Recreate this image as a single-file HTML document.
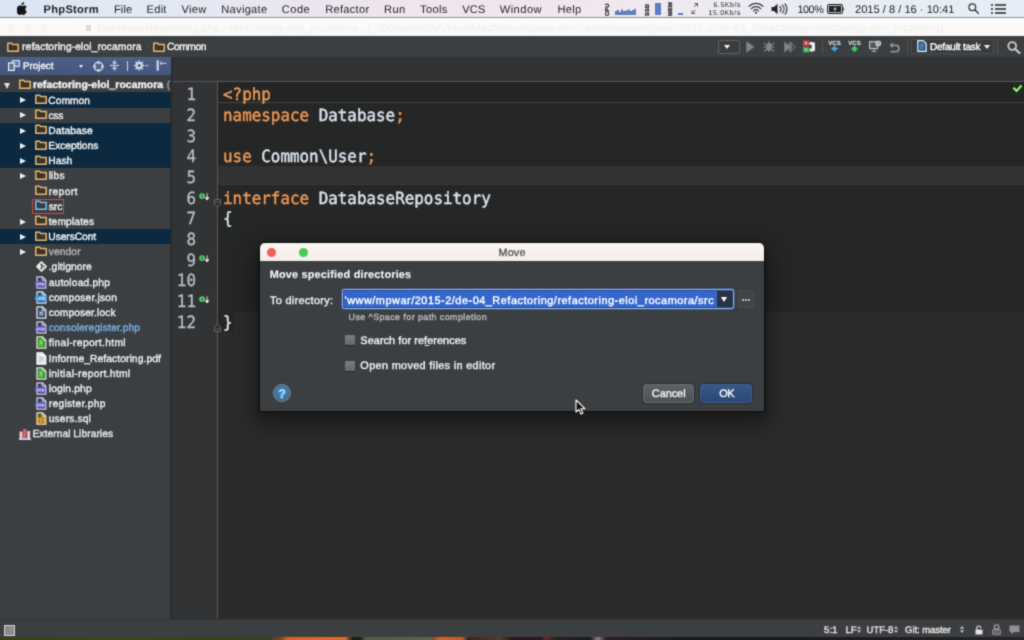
<!DOCTYPE html>
<html><head><meta charset="utf-8"><title>Move</title>
<style>
*{box-sizing:border-box;margin:0;padding:0}
html,body{width:1024px;height:640px;overflow:hidden;background:#2b2b2b}
#stage{position:absolute;left:0;top:0;width:1024px;height:640px;overflow:hidden;filter:url(#soft)}
body{position:relative;font-family:"Liberation Sans",sans-serif;color:#e8e8e8;text-rendering:geometricPrecision}
.abs{position:absolute}
.tx{position:absolute;white-space:pre;font-family:"Liberation Sans",sans-serif;-webkit-text-stroke:.38px currentColor}
#menubar{left:0;top:0;width:1024px;height:18px;background:linear-gradient(90deg,#dae6f3 0%,#e2e9f4 15%,#ebe5ef 30%,#f1e5ed 45%,#f2e7ee 58%,#edeaf2 70%,#e7edf5 85%,#e5edf6 100%);border-bottom:1px solid #8f9195}
#titlebar{left:0;top:18px;width:1024px;height:18px;background:linear-gradient(180deg,#fefdfd,#f9f7f6)}
#toolbar{left:0;top:36px;width:1024px;height:21px;background:#3c3f41}
#tabs{left:173px;top:57px;width:851px;height:24px;background:#313335}
#tabline{left:173px;top:80.700px;width:851px;height:1px;background:#555759}
#panel{left:0;top:57px;width:170px;height:562px;background:#3c3f41}
#split{left:170px;top:57px;width:2.500px;height:562px;background:#2c2e2f}
#phead{left:0;top:57.200px;width:170.500px;height:18px;background:linear-gradient(180deg,#4c5f87,#44567d)}
.row{position:absolute;left:0;width:170.500px;height:15.170px}
.row.sel{background:#0c293f}
.row .ar{position:absolute;top:4.800px;width:0;height:0;border-left:6.600px solid #f0f0f0;border-top:3.700px solid transparent;border-bottom:3.700px solid transparent}
.row .ard{position:absolute;top:5.500px;width:0;height:0;border-top:6px solid #e4e4e4;border-left:3.200px solid transparent;border-right:3.200px solid transparent}
.row svg{position:absolute}
#gutter{left:172.500px;top:81px;width:45.500px;height:538px;background:#313335;border-right:1px solid #58595a}
#editor{left:218px;top:81px;width:806px;height:538px;background:#2b2b2b}
.ln{position:absolute;left:164.200px;width:32px;text-align:right;font-family:"DejaVu Sans Mono","Liberation Mono",monospace;font-size:16.800px;line-height:20.690px;color:#b9bdc0;transform:scaleX(.9465);transform-origin:100% 50%;-webkit-text-stroke:.35px currentColor}
.code{position:absolute;left:222.600px;font-family:"DejaVu Sans Mono","Liberation Mono",monospace;font-size:16.800px;line-height:20.690px;color:#dbe4ee;white-space:pre;transform:scaleX(.9465);transform-origin:0 50%;-webkit-text-stroke:.45px currentColor}
.k{color:#ee9854}
#status{left:0;top:619px;width:1024px;height:18px;background:#3c3f41;border-top:1px solid #333537}
#wall{left:0;top:636.500px;width:1024px;height:4px;background:linear-gradient(90deg,#3a3f16 0,#3f4417 120px,#37401a 270px,#7a4a1c 281px,#d8661e 288px,#e06a1f 345px,#1a1a14 353px,#1d201a 360px,#4f5f4c 366px,#55634f 425px,#8a5428 434px,#d4641f 440px,#c45a20 462px,#3a2418 468px,#5a3a22 500px,#2a1a1a 512px,#251a1c 540px,#6a2226 546px,#2a2022 556px,#201a1c 590px,#8a8078 598px,#2a2022 606px,#1c1618 700px,#221a1c 860px,#2a2426 1024px)}
#dlg{left:260px;top:242.800px;width:504px;height:168.400px;background:#3c3f41;border-radius:5px 5px 2.500px 2.500px;box-shadow:0 9px 22px 7px rgba(0,0,0,.36),0 1px 5px 1px rgba(0,0,0,.25),0 0 0 1px rgba(0,0,0,.3)}
#dtitle{left:0;top:0;width:504px;height:18px;background:linear-gradient(180deg,#fbf5f4,#f4edeb);border-radius:5px 5px 0 0}
.dot{position:absolute;top:5px;width:9.200px;height:9.200px;border-radius:50%}
.btn{position:absolute;top:140.800px;height:19px;border-radius:3px;border:1px solid #666b6e;box-shadow:0 0 0 1px rgba(0,0,0,.25)}
</style></head><body>
<svg width="0" height="0" style="position:absolute"><filter id="soft" x="0" y="0" width="100%" height="100%" color-interpolation-filters="sRGB"><feConvolveMatrix order="3" kernelMatrix="0.03 0.11 0.03 0.11 0.44 0.11 0.03 0.11 0.03" divisor="1" edgeMode="duplicate" preserveAlpha="true"/></filter></svg>
<div id="stage">

<div id="menubar" class="abs">
<svg class="abs" style="left:17px;top:1.500px" width="10" height="13" viewBox="0 0 10 13"><path d="M7.200 0c.1.900-.3 1.700-.8 2.300-.5.600-1.300 1-2 .9-.1-.9.300-1.700.8-2.200C5.700.4 6.500 0 7.200 0zM9.800 9.400c-.3.700-.5 1.100-.9 1.700-.5.800-1.300 1.800-2.200 1.800-.8 0-1-.5-2.100-.5s-1.400.5-2.200.5c-.9 0-1.600-.9-2.100-1.700C-.5 9-.7 6.300.5 4.900 1.100 4.100 2 3.600 2.900 3.600c.9 0 1.500.5 2.300.5.700 0 1.200-.5 2.300-.5.800 0 1.700.4 2.300 1.200-2 1.100-1.700 3.900 0 4.600z" fill="#151515"/></svg>
<span class="tx" style="left:43.60px;top:3.00px;font-size:11.1px;line-height:14px;color:#222;letter-spacing:0.283px;font-weight:bold;-webkit-text-stroke:0;">PhpStorm</span>
<span class="tx" style="left:114.00px;top:3.00px;font-size:11.1px;line-height:14px;color:#222;letter-spacing:0.079px;-webkit-text-stroke:0;">File</span>
<span class="tx" style="left:146.60px;top:3.00px;font-size:11.1px;line-height:14px;color:#222;letter-spacing:0.243px;-webkit-text-stroke:0;">Edit</span>
<span class="tx" style="left:181.40px;top:3.00px;font-size:11.1px;line-height:14px;color:#222;letter-spacing:0.335px;-webkit-text-stroke:0;">View</span>
<span class="tx" style="left:221.30px;top:3.00px;font-size:11.1px;line-height:14px;color:#222;letter-spacing:0.287px;-webkit-text-stroke:0;">Navigate</span>
<span class="tx" style="left:281.80px;top:3.00px;font-size:11.1px;line-height:14px;color:#222;letter-spacing:0.466px;-webkit-text-stroke:0;">Code</span>
<span class="tx" style="left:325.30px;top:3.00px;font-size:11.1px;line-height:14px;color:#222;letter-spacing:0.269px;-webkit-text-stroke:0;">Refactor</span>
<span class="tx" style="left:384.10px;top:3.00px;font-size:11.1px;line-height:14px;color:#222;letter-spacing:0.379px;-webkit-text-stroke:0;">Run</span>
<span class="tx" style="left:420.00px;top:3.00px;font-size:11.1px;line-height:14px;color:#222;letter-spacing:0.378px;-webkit-text-stroke:0;">Tools</span>
<span class="tx" style="left:462.20px;top:3.00px;font-size:11.1px;line-height:14px;color:#222;letter-spacing:0.192px;-webkit-text-stroke:0;">VCS</span>
<span class="tx" style="left:499.70px;top:3.00px;font-size:11.1px;line-height:14px;color:#222;letter-spacing:0.487px;-webkit-text-stroke:0;">Window</span>
<span class="tx" style="left:557.50px;top:3.00px;font-size:11.1px;line-height:14px;color:#222;letter-spacing:0.243px;-webkit-text-stroke:0;">Help</span>
<span class="tx" style="left:797.50px;top:3.00px;font-size:10.8px;line-height:14px;color:#222;letter-spacing:-0.455px;-webkit-text-stroke:0;">100%</span>
<span class="tx" style="left:855.00px;top:3.00px;font-size:11.1px;line-height:14px;color:#222;letter-spacing:0.007px;-webkit-text-stroke:0;">2015 / 8 / 16 · 10:41</span>
<span class="tx" style="left:713.50px;top:2.00px;font-size:6.8px;line-height:8px;color:#222;letter-spacing:0.635px;-webkit-text-stroke:0;">6.5Kb/s</span>
<span class="tx" style="left:708.60px;top:10.00px;font-size:6.8px;line-height:8px;color:#222;letter-spacing:0.695px;-webkit-text-stroke:0;">15.0Kb/s</span>
<span class="tx" style="left:605px;top:15.500px;font-size:5.600px;line-height:6px;font-weight:bold;color:#333;transform:rotate(-90deg);transform-origin:0 0;letter-spacing:.3px">CPU</span>
<span class="tx" style="left:644.5px;top:15.500px;font-size:5.600px;line-height:6px;font-weight:bold;color:#333;transform:rotate(-90deg);transform-origin:0 0;letter-spacing:.3px">SSD</span>
<span class="tx" style="left:667.5px;top:15.500px;font-size:5.600px;line-height:6px;font-weight:bold;color:#333;transform:rotate(-90deg);transform-origin:0 0;letter-spacing:.3px">MEM</span>
<svg class="abs" style="left:615px;top:8px" width="23" height="7" viewBox="0 0 23 7"><path d="M0 7V3h2V2h2v2h2V1.500h2V3h2V2.500h3V1.500h2V3h2V2h2V1h2v6z" fill="#5f7fbe"/></svg>
<div class="abs" style="left:655px;top:3px;width:5.500px;height:11.600px;background:#5c7dc6"></div>
<div class="abs" style="left:678.400px;top:12.600px;width:5px;height:2px;background:#5c7dc6"></div>
<svg class="abs" style="left:691px;top:2px" width="8" height="13" viewBox="0 0 8 13"><path d="M3.500 1.500h3v3M6.500 1.500l-3.500 3.500M4 11.500h-3v-3M1 11.500l3.500-3.500" fill="none" stroke="#555" stroke-width="1"/></svg>
<svg class="abs" style="left:748px;top:2px" width="16" height="12" viewBox="0 0 16 12"><path d="M1 4.200a10 10 0 0 1 14 0M3.300 6.600a6.700 6.700 0 0 1 9.400 0M5.600 8.900a3.400 3.400 0 0 1 4.800 0" fill="none" stroke="#333" stroke-width="1.200" stroke-linecap="round"/><circle cx="8" cy="10.800" r="1.050" fill="#333"/></svg>
<svg class="abs" style="left:771px;top:2.500px" width="19" height="12" viewBox="0 0 19 12"><path d="M.5 4h2.500l3.500-3.200v10.400L3 8H.5z" fill="#222"/><path d="M9 3.500a3.500 3.500 0 0 1 0 5M11.500 2a6 6 0 0 1 0 8M14 .8a8 8 0 0 1 0 10.400" fill="none" stroke="#222" stroke-width="1.100" stroke-linecap="round"/></svg>
<svg class="abs" style="left:827px;top:3.500px" width="18" height="10" viewBox="0 0 18 10"><rect x=".6" y=".6" width="14.800" height="8.800" rx="1.500" fill="none" stroke="#222" stroke-width="1.100"/><rect x="2" y="2" width="12" height="6" fill="#222"/><path d="M16.300 3.200v3.600c1.200-.3 1.200-3.300 0-3.600z" fill="#222"/><path d="M9 2.200L6.300 5.400h1.600L7 7.800l2.800-3.200H8.100z" fill="#eee"/></svg>
<svg class="abs" style="left:968px;top:3px" width="11" height="11" viewBox="0 0 11 11"><circle cx="4.300" cy="4.300" r="3.400" fill="none" stroke="#333" stroke-width="1.200"/><path d="M6.800 6.800l3.500 3.500" stroke="#333" stroke-width="1.400" stroke-linecap="round"/></svg>
<svg class="abs" style="left:991px;top:4px" width="15" height="10" viewBox="0 0 15 10"><path d="M0 1h2M4 1h11M0 5h2M4 5h11M0 9h2M4 9h11" stroke="#222" stroke-width="1.600"/></svg>
</div>

<div id="titlebar" class="abs"><div class="abs" style="left:85.500px;top:6.500px;width:5.500px;height:6.500px;background:#dddada"></div><span class="tx" style="left:97.60px;top:3.00px;font-size:10.5px;line-height:14px;color:#f0eded;letter-spacing:0.323px;-webkit-text-stroke:0;">DatabaseRepository.php - refactoring-eloi_rocamora - [~/Documents/VirtualMachines/mpwar.dev/carmel/www/mpwar/2015-2/de-04_Refactoring/refactoring-eloi_rocamora]</span><i class="abs" style="left:7px;top:5.500px;width:8px;height:8px;border-radius:50%;background:#fdf2f2"></i><i class="abs" style="left:23.500px;top:5.500px;width:8px;height:8px;border-radius:50%;background:#fdf2f2"></i><i class="abs" style="left:40px;top:5.500px;width:8px;height:8px;border-radius:50%;background:#fdf2f2"></i></div>

<div id="toolbar" class="abs">
<svg class="abs" style="left:7.2px;top:5.6px" width="12" height="10" viewBox="0 0 12 10"><path d="M.8 1.300h3.900l1 1.300h5.500v6.600h-10.400z" fill="#3b3326" stroke="#e3b876" stroke-width="1.500" stroke-linejoin="round"/></svg>
<span class="tx" style="left:22.05px;top:5.00px;font-size:10.3px;line-height:14px;color:#f2f2f2;letter-spacing:0.092px;">refactoring-eloi_rocamora</span>
<svg class="abs" style="left:145px;top:6px" width="5" height="9" viewBox="0 0 5 9"><path d="M1 .5l3 4-3 4" fill="none" stroke="#4d5052" stroke-width="1"/></svg>
<svg class="abs" style="left:152.6px;top:5.6px" width="12" height="10" viewBox="0 0 12 10"><path d="M.8 1.300h3.900l1 1.300h5.500v6.600h-10.400z" fill="#3b3326" stroke="#e3b876" stroke-width="1.500" stroke-linejoin="round"/></svg>
<span class="tx" style="left:167.05px;top:5.00px;font-size:10.3px;line-height:14px;color:#f2f2f2;letter-spacing:-0.480px;">Common</span>
<div class="abs" style="left:717.800px;top:3.500px;width:22px;height:14px;border:1px solid #606365;border-radius:2px;background:#3a3d3f"></div>
<div class="abs" style="left:724.400px;top:8.600px;width:0;height:0;border-top:4.500px solid #f4f4f4;border-left:3.800px solid transparent;border-right:3.800px solid transparent"></div>
<svg class="abs" style="left:745.500px;top:4.500px" width="9" height="12" viewBox="0 0 9 12"><path d="M.3 .3l8.200 5.700-8.200 5.700z" fill="#828587"/></svg>
<svg class="abs" style="left:763px;top:4px" width="12" height="13" viewBox="0 0 12 13"><ellipse cx="6" cy="7" rx="2.800" ry="4" fill="#828587"/><path d="M6 1v11M1 3l3.200 2.500M11 3L7.800 5.500M.3 7h11.400M1 11.500l3.200-2.500M11 11.500L7.800 9" stroke="#828587" stroke-width="1.100" fill="none"/></svg>
<svg class="abs" style="left:784px;top:4.500px" width="12" height="12" viewBox="0 0 12 12"><path d="M.3 .5l6 5.500-6 5.500z" fill="#85888a"/><path d="M6 .8l5.300 5.200L6 11.200zM4 3l4 3-4 3M8 3l-3 3 3 3" fill="none" stroke="#85888a" stroke-width="1"/></svg>
<svg class="abs" style="left:802px;top:4px" width="14" height="13" viewBox="0 0 14 13"><rect x="1" y=".5" width="6" height="5.500" fill="#d8453e"/><rect x="1" y="7" width="6" height="5.500" fill="#3faa55"/><path d="M7.500 2h3.500a2 2 0 0 1 2 2v5.500a2 2 0 0 1-2 2H7.500V8.500h2.200V5H7.500z" fill="#eceff1"/><rect x="3" y="2" width="2" height="2" fill="#f3b5b0"/><rect x="3" y="8.700" width="2" height="2" fill="#b5e5bf"/></svg>
<div class="abs" style="left:822px;top:3px;width:1px;height:15px;background:#57503f"></div>
<svg class="abs" style="left:827.8px;top:3px" width="13" height="14" viewBox="0 0 13 14"><text x="6.500" y="5.600" text-anchor="middle" font-family="Liberation Sans, sans-serif" font-weight="bold" font-size="6.200" fill="#eef1f4">VCS</text><path d="M6.500 12.800L2.600 8.900h2.200V7.200h3.400v1.700h2.200z" fill="#4aa4e6"/></svg>
<svg class="abs" style="left:848px;top:3px" width="13" height="14" viewBox="0 0 13 14"><text x="6.500" y="5.600" text-anchor="middle" font-family="Liberation Sans, sans-serif" font-weight="bold" font-size="6.200" fill="#eef1f4">VCS</text><path d="M6.500 6.600l3.900 3.900H8.200v2H4.800v-2H2.600z" fill="#3fcf5e"/></svg>
<svg class="abs" style="left:868.500px;top:4px" width="13" height="13" viewBox="0 0 13 13"><rect x=".6" y="1.600" width="8" height="7" fill="#55585a" stroke="#b9bcbe" stroke-width="1.200"/><path d="M2.500 11.500h5M5 9v2.500" stroke="#a9acae" stroke-width="1.200"/><circle cx="9.300" cy="3.400" r="2.900" fill="#c3c6c8"/><path d="M9.300 1.800v1.800l1.200.8" stroke="#55585a" stroke-width=".8" fill="none"/></svg>
<svg class="abs" style="left:888.500px;top:5.500px" width="11" height="11" viewBox="0 0 11 11"><path d="M3.800 .3L.4 3.300l3.400 3z" fill="#8f9294"/><path d="M3 3.300h3.800a3.200 3.200 0 0 1 0 6.400H1.500" fill="none" stroke="#8f9294" stroke-width="1.700"/></svg>
<div class="abs" style="left:907px;top:3px;width:1px;height:15px;background:#55524a"></div>
<div class="abs" style="left:911.200px;top:3.400px;width:82.500px;height:14.200px;border:1px dotted #5d5a4e;background:#393c3e"></div>
<svg class="abs" style="left:916.500px;top:4.200px" width="10" height="12" viewBox="0 0 10 12"><path d="M.8 .6h5.400l3 2.900v7.900H.8z" fill="#2f5d8a" stroke="#e9eef3" stroke-width="1.200" stroke-linejoin="round"/><path d="M3.200 4.300h3.500M3.200 6.300h3.500M3.200 8.300h2.500" stroke="#7fb2de" stroke-width=".8"/></svg>
<span class="tx" style="left:930.05px;top:5.00px;font-size:9.9px;line-height:14px;color:#fafafa;letter-spacing:-0.148px;-webkit-text-stroke:.4px currentColor;">Default task</span>
<div class="abs" style="left:984px;top:8.600px;width:0;height:0;border-top:4.200px solid #f4f4f4;border-left:3.500px solid transparent;border-right:3.500px solid transparent"></div>
<div class="abs" style="left:997px;top:3px;width:1px;height:15px;background:#55524a"></div>
<svg class="abs" style="left:1007px;top:5px" width="14" height="13" viewBox="0 0 14 13"><circle cx="5.200" cy="5" r="3.900" fill="none" stroke="#c9cbcd" stroke-width="1.800"/><path d="M8.200 8l4.300 4" stroke="#c9cbcd" stroke-width="2.200" stroke-linecap="round"/></svg>
</div>

<div id="tabs" class="abs"></div>
<div id="panel" class="abs"></div>
<div id="split" class="abs"></div>
<div id="phead" class="abs">
<svg class="abs" style="left:7.500px;top:3.300px" width="12" height="11" viewBox="0 0 12 11"><rect x="4.500" y=".6" width="6.900" height="5.800" fill="#5d82b8" stroke="#e8eef6" stroke-width="1"/><rect x=".6" y="3" width="5.600" height="7.400" fill="#5b6f96" stroke="#f2f5f9" stroke-width="1.200"/></svg>
<span class="tx" style="left:22.95px;top:3.00px;font-size:9.7px;line-height:14px;color:#f4f6fa;letter-spacing:0.059px;">Project</span>
<div class="abs" style="left:78.700px;top:7.600px;width:0;height:0;border-top:3.600px solid #eef1f6;border-left:2.600px solid transparent;border-right:2.600px solid transparent"></div>
<svg class="abs" style="left:92.500px;top:3.500px" width="11" height="11" viewBox="0 0 11 11"><circle cx="5.500" cy="5.500" r="4.200" fill="none" stroke="#d6dce8" stroke-width="1.500"/><path d="M5.500 0v3.400M5.500 7.600V11M0 5.500h3.400M7.600 5.500H11" stroke="#d6dce8" stroke-width="1.400"/></svg>
<svg class="abs" style="left:110.300px;top:3.300px" width="9" height="11" viewBox="0 0 9 11"><path d="M0 5.500h9" stroke="#ccd3e0" stroke-width="1.200"/><path d="M4.500 .2v3.300M2.500 2l2 2 2-2M4.500 10.800V7.500M2.500 9l2-2 2 2" stroke="#ccd3e0" stroke-width="1.100" fill="none"/></svg>
<div class="abs" style="left:126.600px;top:3.800px;width:1.200px;height:10.500px;background:#cfd6e2"></div>
<svg class="abs" style="left:133.600px;top:3.300px" width="15" height="11" viewBox="0 0 15 11"><circle cx="5.200" cy="5.500" r="2.600" fill="none" stroke="#d6dce8" stroke-width="2"/><path d="M5.200 .4v2M5.200 8.600v2M.1 5.500h2M8.300 5.500h2M1.600 1.900l1.400 1.400M7.400 7.700l1.400 1.400M1.600 9.100L3 7.700M7.400 3.300l1.400-1.400" stroke="#d6dce8" stroke-width="1.500"/><path d="M11.700 5.700h2.600" stroke="#cfd6e2" stroke-width="1.100"/></svg>
<svg class="abs" style="left:155.500px;top:3.300px" width="11" height="11" viewBox="0 0 11 11"><path d="M1.700 .3v10.400" stroke="#dfe4ee" stroke-width="2"/><path d="M4 3.300h6.500M4 3.300l2-1.600M4 3.300l2 1.600" stroke="#ccd3e0" stroke-width="1" fill="none"/></svg>
</div>

<div id="tree">
<div class="row" style="top:77.30px"><i class="ard" style="left:3.7px"></i><svg style="left:18.7px;top:1.600px" width="12" height="10" viewBox="0 0 12 10"><path d="M.8 1.300h3.900l1 1.300h5.500v6.600h-10.400z" fill="#3b3326" stroke="#e3b876" stroke-width="1.500" stroke-linejoin="round"/></svg><span class="tx" style="left:32.95px;top:1.70px;font-size:10.4px;line-height:14px;color:#f4f4f4;letter-spacing:0.057px;font-weight:bold;">refactoring-eloi_rocamora</span><span class="tx" style="left:166.75px;top:1.70px;font-size:10.3px;line-height:14px;color:#9a9a9a;letter-spacing:0.000px;">(</span></div>
<div class="row sel" style="top:92.47px"><i class="ar" style="left:19.8px"></i><svg style="left:34.7px;top:1.600px" width="12" height="10" viewBox="0 0 12 10"><path d="M.8 1.300h3.900l1 1.300h5.500v6.600h-10.400z" fill="#3b3326" stroke="#e3b876" stroke-width="1.500" stroke-linejoin="round"/></svg><span class="tx" style="left:48.30px;top:2.53px;font-size:10.3px;line-height:14px;color:#f4f4f4;letter-spacing:-0.005px;">Common</span></div>
<div class="row" style="top:107.64px"><i class="ar" style="left:19.8px"></i><svg style="left:34.7px;top:1.600px" width="12" height="10" viewBox="0 0 12 10"><path d="M.8 1.300h3.900l1 1.300h5.500v6.600h-10.400z" fill="#3b3326" stroke="#e3b876" stroke-width="1.500" stroke-linejoin="round"/></svg><span class="tx" style="left:48.45px;top:2.36px;font-size:10.3px;line-height:14px;color:#ededed;letter-spacing:-0.217px;">css</span></div>
<div class="row sel" style="top:122.81px"><i class="ar" style="left:19.8px"></i><svg style="left:34.7px;top:1.600px" width="12" height="10" viewBox="0 0 12 10"><path d="M.8 1.300h3.900l1 1.300h5.500v6.600h-10.400z" fill="#3b3326" stroke="#e3b876" stroke-width="1.500" stroke-linejoin="round"/></svg><span class="tx" style="left:48.30px;top:2.19px;font-size:10.3px;line-height:14px;color:#f4f4f4;letter-spacing:0.039px;">Database</span></div>
<div class="row sel" style="top:137.98px"><i class="ar" style="left:19.8px"></i><svg style="left:34.7px;top:1.600px" width="12" height="10" viewBox="0 0 12 10"><path d="M.8 1.300h3.900l1 1.300h5.500v6.600h-10.400z" fill="#3b3326" stroke="#e3b876" stroke-width="1.500" stroke-linejoin="round"/></svg><span class="tx" style="left:48.30px;top:2.02px;font-size:10.3px;line-height:14px;color:#f4f4f4;letter-spacing:-0.033px;">Exceptions</span></div>
<div class="row sel" style="top:153.15px"><i class="ar" style="left:19.8px"></i><svg style="left:34.7px;top:1.600px" width="12" height="10" viewBox="0 0 12 10"><path d="M.8 1.300h3.900l1 1.300h5.500v6.600h-10.400z" fill="#3b3326" stroke="#e3b876" stroke-width="1.500" stroke-linejoin="round"/></svg><span class="tx" style="left:48.30px;top:1.85px;font-size:10.3px;line-height:14px;color:#f4f4f4;letter-spacing:-0.024px;">Hash</span></div>
<div class="row" style="top:168.32px"><i class="ar" style="left:19.8px"></i><svg style="left:34.7px;top:1.600px" width="12" height="10" viewBox="0 0 12 10"><path d="M.8 1.300h3.900l1 1.300h5.500v6.600h-10.400z" fill="#3b3326" stroke="#e3b876" stroke-width="1.500" stroke-linejoin="round"/></svg><span class="tx" style="left:48.65px;top:1.68px;font-size:10.3px;line-height:14px;color:#ededed;letter-spacing:0.161px;">libs</span></div>
<div class="row" style="top:183.49px"><svg style="left:34.7px;top:1.600px" width="12" height="10" viewBox="0 0 12 10"><path d="M.8 1.300h3.900l1 1.300h5.500v6.600h-10.400z" fill="#3b3326" stroke="#e3b876" stroke-width="1.500" stroke-linejoin="round"/></svg><span class="tx" style="left:48.65px;top:2.51px;font-size:10.3px;line-height:14px;color:#ededed;letter-spacing:0.383px;">report</span></div>
<div class="row" style="top:198.66px"><svg style="left:34.7px;top:1.600px" width="12" height="10" viewBox="0 0 12 10"><path d="M.8 1.300h3.900l1 1.300h5.500v6.600h-10.400z" fill="#2d3d4a" stroke="#86bfe6" stroke-width="1.500" stroke-linejoin="round"/></svg><i style="position:absolute;left:32px;top:.6px;width:32px;height:15px;border:1px solid #c9484a"></i><span class="tx" style="left:48.65px;top:2.34px;font-size:10.3px;line-height:14px;color:#f4f4f4;letter-spacing:-0.010px;">src</span></div>
<div class="row" style="top:213.83px"><i class="ar" style="left:19.8px"></i><svg style="left:34.7px;top:1.600px" width="12" height="10" viewBox="0 0 12 10"><path d="M.8 1.300h3.900l1 1.300h5.500v6.600h-10.400z" fill="#3b3326" stroke="#e3b876" stroke-width="1.500" stroke-linejoin="round"/></svg><span class="tx" style="left:48.65px;top:2.17px;font-size:10.3px;line-height:14px;color:#ededed;letter-spacing:0.100px;">templates</span></div>
<div class="row sel" style="top:229.00px"><i class="ar" style="left:19.8px"></i><svg style="left:34.7px;top:1.600px" width="12" height="10" viewBox="0 0 12 10"><path d="M.8 1.300h3.900l1 1.300h5.500v6.600h-10.400z" fill="#3b3326" stroke="#e3b876" stroke-width="1.500" stroke-linejoin="round"/></svg><span class="tx" style="left:48.30px;top:2.00px;font-size:10.3px;line-height:14px;color:#f4f4f4;letter-spacing:-0.100px;">UsersCont</span></div>
<div class="row" style="top:244.17px"><i class="ar" style="left:19.8px"></i><svg style="left:34.7px;top:1.600px" width="12" height="10" viewBox="0 0 12 10"><path d="M.8 1.300h3.900l1 1.300h5.500v6.600h-10.400z" fill="#3b3326" stroke="#e3b876" stroke-width="1.500" stroke-linejoin="round"/></svg><span class="tx" style="left:48.65px;top:1.83px;font-size:10.3px;line-height:14px;color:#b4b4b4;letter-spacing:0.093px;">vendor</span></div>
<div class="row" style="top:259.34px"><svg style="left:34.7px;top:1px" width="13" height="13" viewBox="0 0 13 13"><rect x="2.400" y="2.400" width="8.200" height="8.200" rx="1" transform="rotate(45 6.500 6.500)" fill="#ececec"/><circle cx="6.500" cy="4.600" r="1" fill="#3c3f41"/><circle cx="6.500" cy="8.600" r="1" fill="#3c3f41"/><circle cx="8.600" cy="6.500" r=".9" fill="#3c3f41"/><path d="M6.500 4.600v4M6.500 5l2.100 1.500" stroke="#3c3f41" stroke-width=".9" fill="none"/></svg><span class="tx" style="left:48.65px;top:1.66px;font-size:10.3px;line-height:14px;color:#ededed;letter-spacing:0.093px;">.gitignore</span></div>
<div class="row" style="top:274.51px"><svg style="left:34.7px;top:1.300px" width="12" height="13" viewBox="-1 0 12 13"><path d="M1 .8h5.300l3.500 3.400v8H1z" fill="#3d3f58" stroke="#cfd0f2" stroke-width="1.300" stroke-linejoin="round"/><path d="M6.200 .8v3.500h3.600" fill="none" stroke="#cfd0f2" stroke-width="1"/><rect x="-.6" y="5.600" width="9.800" height="4.800" rx=".8" fill="#6f63cc"/><path d="M1 7v3M1 7.300h1.200v1.500H1M3.800 6.300v3M3.800 7.300H5V9.300M6.600 7v3M6.600 7.300h1.200v1.500H6.600" stroke="#cfcaf8" stroke-width=".8" fill="none"/></svg><span class="tx" style="left:48.65px;top:2.49px;font-size:10.3px;line-height:14px;color:#ededed;letter-spacing:0.162px;">autoload.php</span></div>
<div class="row" style="top:289.68px"><svg style="left:34.7px;top:1.300px" width="12" height="13" viewBox="-1 0 12 13"><path d="M1 .8h5.300l3.500 3.400v8H1z" fill="#35506e" stroke="#cfe6fa" stroke-width="1.300" stroke-linejoin="round"/><path d="M6.200 .8v3.500h3.600" fill="none" stroke="#cfe6fa" stroke-width="1"/><rect x="-1" y="4.800" width="12" height="5.400" rx="1.300" fill="#3f8fde"/><path d="M1 6.500v2.200M3 6.200h1.500v1.300H3v1.300h1.500M6.200 6.200h1.600v2.600H6.200zM9 6.200v2.600" stroke="#d4ebfd" stroke-width=".8" fill="none"/></svg><span class="tx" style="left:48.65px;top:2.32px;font-size:10.3px;line-height:14px;color:#ededed;letter-spacing:0.153px;">composer.json</span></div>
<div class="row" style="top:304.85px"><svg style="left:34.7px;top:1.300px" width="12" height="13" viewBox="-1 0 12 13"><path d="M1 .8h5.300l3.500 3.400v8H1z" fill="#3b4652" stroke="#dce7f2" stroke-width="1.300" stroke-linejoin="round"/><path d="M6.200 .8v3.500h3.600" fill="none" stroke="#dce7f2" stroke-width="1"/><rect x="3" y="5" width="4.600" height="4.800" fill="#6a8cae"/><path d="M4 6.500h2.600M4 8h2.600" stroke="#b9cee2" stroke-width=".7"/></svg><span class="tx" style="left:48.65px;top:2.15px;font-size:10.3px;line-height:14px;color:#ededed;letter-spacing:0.098px;">composer.lock</span></div>
<div class="row" style="top:320.02px"><svg style="left:34.7px;top:1.300px" width="12" height="13" viewBox="-1 0 12 13"><path d="M1 .8h5.300l3.500 3.400v8H1z" fill="#3d3f58" stroke="#cfd0f2" stroke-width="1.300" stroke-linejoin="round"/><path d="M6.200 .8v3.500h3.600" fill="none" stroke="#cfd0f2" stroke-width="1"/><rect x="-.6" y="5.600" width="9.800" height="4.800" rx=".8" fill="#6f63cc"/><path d="M1 7v3M1 7.300h1.200v1.500H1M3.800 6.300v3M3.800 7.300H5V9.300M6.600 7v3M6.600 7.300h1.200v1.500H6.600" stroke="#cfcaf8" stroke-width=".8" fill="none"/></svg><span class="tx" style="left:48.75px;top:1.98px;font-size:10.3px;line-height:14px;color:#79aee0;letter-spacing:0.112px;">consoleregister.php</span></div>
<div class="row" style="top:335.19px"><svg style="left:34.7px;top:1.300px" width="12" height="13" viewBox="-1 0 12 13"><path d="M1 .8h5.300l3.500 3.400v8H1z" fill="#3e7a36" stroke="#d6ecd0" stroke-width="1.300" stroke-linejoin="round"/><path d="M6.200 .8v3.500h3.600" fill="none" stroke="#d6ecd0" stroke-width="1"/><rect x="2.600" y="3" width="5" height="7.600" fill="#59b845"/><path d="M4 5l1.600 1.700L4 8.400" stroke="#c9f0be" stroke-width=".9" fill="none"/></svg><span class="tx" style="left:48.75px;top:1.81px;font-size:10.3px;line-height:14px;color:#ededed;letter-spacing:0.333px;">final-report.html</span></div>
<div class="row" style="top:350.36px"><svg style="left:34.7px;top:1.300px" width="12" height="13" viewBox="-1 0 12 13"><path d="M1 .8h5.300l3.500 3.400v8H1z" fill="#e6e9ec" stroke="#f7f8f9" stroke-width="1.300" stroke-linejoin="round"/><path d="M6.200 .8v3.500h3.600" fill="none" stroke="#f7f8f9" stroke-width="1"/><path d="M3 5.500h4.500M3 7.300h4.500M3 9h3" stroke="#aab2ba" stroke-width=".8"/></svg><span class="tx" style="left:48.75px;top:2.64px;font-size:10.3px;line-height:14px;color:#ededed;letter-spacing:0.074px;">Informe_Refactoring.pdf</span></div>
<div class="row" style="top:365.53px"><svg style="left:34.7px;top:1.300px" width="12" height="13" viewBox="-1 0 12 13"><path d="M1 .8h5.300l3.500 3.400v8H1z" fill="#3e7a36" stroke="#d6ecd0" stroke-width="1.300" stroke-linejoin="round"/><path d="M6.200 .8v3.500h3.600" fill="none" stroke="#d6ecd0" stroke-width="1"/><rect x="2.600" y="3" width="5" height="7.600" fill="#59b845"/><path d="M4 5l1.600 1.700L4 8.400" stroke="#c9f0be" stroke-width=".9" fill="none"/></svg><span class="tx" style="left:48.75px;top:2.47px;font-size:10.3px;line-height:14px;color:#ededed;letter-spacing:0.294px;">initial-report.html</span></div>
<div class="row" style="top:380.70px"><svg style="left:34.7px;top:1.300px" width="12" height="13" viewBox="-1 0 12 13"><path d="M1 .8h5.300l3.500 3.400v8H1z" fill="#3d3f58" stroke="#cfd0f2" stroke-width="1.300" stroke-linejoin="round"/><path d="M6.200 .8v3.500h3.600" fill="none" stroke="#cfd0f2" stroke-width="1"/><rect x="-.6" y="5.600" width="9.800" height="4.800" rx=".8" fill="#6f63cc"/><path d="M1 7v3M1 7.300h1.200v1.500H1M3.800 6.300v3M3.800 7.300H5V9.300M6.600 7v3M6.600 7.300h1.200v1.500H6.600" stroke="#cfcaf8" stroke-width=".8" fill="none"/></svg><span class="tx" style="left:48.75px;top:2.30px;font-size:10.3px;line-height:14px;color:#ededed;letter-spacing:0.144px;">login.php</span></div>
<div class="row" style="top:395.87px"><svg style="left:34.7px;top:1.300px" width="12" height="13" viewBox="-1 0 12 13"><path d="M1 .8h5.300l3.500 3.400v8H1z" fill="#3d3f58" stroke="#cfd0f2" stroke-width="1.300" stroke-linejoin="round"/><path d="M6.200 .8v3.500h3.600" fill="none" stroke="#cfd0f2" stroke-width="1"/><rect x="-.6" y="5.600" width="9.800" height="4.800" rx=".8" fill="#6f63cc"/><path d="M1 7v3M1 7.300h1.200v1.500H1M3.800 6.300v3M3.800 7.300H5V9.300M6.600 7v3M6.600 7.300h1.200v1.500H6.600" stroke="#cfcaf8" stroke-width=".8" fill="none"/></svg><span class="tx" style="left:48.75px;top:2.13px;font-size:10.3px;line-height:14px;color:#ededed;letter-spacing:0.257px;">register.php</span></div>
<div class="row" style="top:411.04px"><svg style="left:34.7px;top:1.300px" width="12" height="13" viewBox="-1 0 12 13"><path d="M1 .8h5.300l3.500 3.400v8H1z" fill="#5e5226" stroke="#efe9d2" stroke-width="1.300" stroke-linejoin="round"/><path d="M6.200 .8v3.500h3.600" fill="none" stroke="#efe9d2" stroke-width="1"/><rect x=".8" y="5.200" width="8.800" height="5.600" fill="#e6a22c"/><path d="M3.600 5.200v5.600M6.600 5.200v5.600" stroke="#8a6416" stroke-width=".8"/></svg><span class="tx" style="left:48.75px;top:1.96px;font-size:10.3px;line-height:14px;color:#ededed;letter-spacing:0.099px;">users.sql</span></div>
<div class="row" style="top:426.21px"><svg style="left:18.8px;top:1.500px" width="12" height="12" viewBox="0 0 12 12"><rect x=".5" y="3.500" width="3" height="8" fill="#f0c7cc"/><rect x="4.200" y="1" width="3.200" height="10.500" fill="#e0606c"/><rect x="8.200" y="3" width="3" height="8.500" fill="#f0c7cc"/><rect x="0" y="10.300" width="12" height="1.700" fill="#c6d4f0"/></svg><span class="tx" style="left:32.45px;top:1.79px;font-size:10.3px;line-height:14px;color:#e8e8e8;letter-spacing:0.031px;">External Libraries</span></div>
</div>

<div id="gutter" class="abs"></div>
<div id="editor" class="abs">
<div class="abs" style="left:0;top:0;width:806px;height:230.500px;background:#252626"></div>
<div class="abs" style="left:0;top:0;width:806px;height:22px;background:#242525;border-bottom:1px solid #444545"></div>
<div class="abs" style="left:0;top:230.500px;width:15.500px;height:20.700px;background:#252626"></div>
<div class="abs" style="left:0;top:84.800px;width:806px;height:19.600px;background:#323232;border-bottom:1px solid #383838"></div>
</div>
<div id="tabline" class="abs"></div>
<svg class="abs" style="left:1011px;top:82.500px" width="13" height="11" viewBox="0 0 13 11"><rect width="13" height="11" fill="#16301a"/><path d="M2.500 4.800l3 3.200 5-5.500" fill="none" stroke="#a9ea8c" stroke-width="2.200"/></svg>
<div id="lines">
<div class="ln" style="top:84.20px">1</div>
<div class="code" style="top:84.20px"><span class="k">&lt;?php</span></div>
<div class="ln" style="top:104.89px">2</div>
<div class="code" style="top:104.89px"><span class="k">namespace</span> Database<span class="k">;</span></div>
<div class="ln" style="top:125.58px">3</div>
<div class="ln" style="top:146.27px">4</div>
<div class="code" style="top:146.27px"><span class="k">use</span> Common\User<span class="k">;</span></div>
<div class="ln" style="top:166.96px">5</div>
<div class="ln" style="top:187.65px">6</div>
<div class="code" style="top:187.65px"><span class="k">interface</span> DatabaseRepository</div>
<div class="ln" style="top:208.34px">7</div>
<div class="code" style="top:208.34px">{</div>
<div class="ln" style="top:229.03px">8</div>
<div class="ln" style="top:249.72px">9</div>
<div class="ln" style="top:270.41px">10</div>
<div class="ln" style="top:291.10px">11</div>
<div class="ln" style="top:311.79px">12</div>
<div class="code" style="top:311.79px">}</div>
<svg class="abs" style="left:199.300px;top:192.85px" width="11" height="10" viewBox="0 0 11 10"><circle cx="3.100" cy="3.100" r="2.900" fill="#62cf6e"/><path d="M3.100 1.500v3.200" stroke="#214a28" stroke-width="1.100"/><path d="M8.100 .4v6.400M6.500 4.700l1.600 2.300 1.600-2.300z" stroke="#e8e8e8" stroke-width="1" fill="#e8e8e8"/></svg>
<svg class="abs" style="left:199.300px;top:254.92px" width="11" height="10" viewBox="0 0 11 10"><circle cx="3.100" cy="3.100" r="2.900" fill="#62cf6e"/><path d="M3.100 1.500v3.200" stroke="#214a28" stroke-width="1.100"/><path d="M8.100 .4v6.400M6.500 4.700l1.600 2.300 1.600-2.300z" stroke="#e8e8e8" stroke-width="1" fill="#e8e8e8"/></svg>
<svg class="abs" style="left:199.300px;top:296.30px" width="11" height="10" viewBox="0 0 11 10"><circle cx="3.100" cy="3.100" r="2.900" fill="#62cf6e"/><path d="M3.100 1.500v3.200" stroke="#214a28" stroke-width="1.100"/><path d="M8.100 .4v6.400M6.500 4.700l1.600 2.300 1.600-2.300z" stroke="#e8e8e8" stroke-width="1" fill="#e8e8e8"/></svg>
<svg class="abs" style="left:214.400px;top:198.75px" width="7" height="9" viewBox="0 0 7 9"><path d="M.6 .6h5.800v4.600L3.500 8.200.6 5.200z" fill="#2b2b2b" stroke="#6c6e70" stroke-width="1"/><path d="M2 3h3" stroke="#6c6e70" stroke-width=".9"/></svg>
<svg class="abs" style="left:214.400px;top:322.99px" width="7" height="9" viewBox="0 0 7 9"><path d="M.6 8.400h5.800V3.800L3.500 .8.600 3.800z" fill="#2b2b2b" stroke="#6c6e70" stroke-width="1"/><path d="M2 6h3" stroke="#6c6e70" stroke-width=".9"/></svg>
</div>

<div id="status" class="abs">
<div class="abs" style="left:4px;top:4.500px;width:11px;height:11px;border:1.500px solid #d0d0d0;background:#8a8c8e"></div>
<span class="tx" style="left:824.10px;top:4.00px;font-size:9.6px;line-height:14px;color:#e2e2e2;letter-spacing:-0.015px;">5:1</span>
<span class="tx" style="left:845.60px;top:4.00px;font-size:9.6px;line-height:14px;color:#e2e2e2;letter-spacing:-0.201px;">LF</span>
<span class="tx" style="left:866.60px;top:4.00px;font-size:9.6px;line-height:14px;color:#e2e2e2;letter-spacing:-0.079px;">UTF-8</span>
<span class="tx" style="left:905.10px;top:4.00px;font-size:9.6px;line-height:14px;color:#e2e2e2;letter-spacing:-0.103px;">Git: master</span>
<svg class="abs" style="left:857px;top:6px" width="4" height="7" viewBox="0 0 4 7"><path d="M2 0l2 2.700H0zM2 7L0 4.300h4z" fill="#c8c8c8"/></svg>
<svg class="abs" style="left:894px;top:6px" width="4" height="7" viewBox="0 0 4 7"><path d="M2 0l2 2.700H0zM2 7L0 4.300h4z" fill="#c8c8c8"/></svg>
<svg class="abs" style="left:960px;top:6px" width="4" height="7" viewBox="0 0 4 7"><path d="M2 0l2 2.700H0zM2 7L0 4.300h4z" fill="#c8c8c8"/></svg>
<svg class="abs" style="left:974.500px;top:4.500px" width="8" height="10" viewBox="0 0 8 10"><rect x=".5" y="4.500" width="7" height="5" fill="#e4e4e4"/><path d="M1.800 4.500V3a2 2 0 0 1 4 0" fill="none" stroke="#e4e4e4" stroke-width="1.200"/></svg>
<svg class="abs" style="left:991.500px;top:4px" width="9" height="11" viewBox="0 0 9 11"><circle cx="4.500" cy="3" r="2.300" fill="none" stroke="#a9abad" stroke-width="1.100"/><rect x=".8" y="5.800" width="7.400" height="4.500" rx="1" fill="none" stroke="#a9abad" stroke-width="1.100"/><path d="M2.500 8h4" stroke="#a9abad" stroke-width="1"/></svg>
<svg class="abs" style="left:1009px;top:5px" width="11" height="10" viewBox="0 0 11 10"><path d="M.5 .5h10v6.500H5l-2.500 2.500V7H.5z" fill="#8f9193"/></svg>
</div>
<div id="wall" class="abs"></div>

<div id="dlg" class="abs">
<div id="dtitle" class="abs"></div>
<span class="tx" style="left:238.45px;top:3.20px;font-size:10.8px;line-height:14px;color:#5c5a58;letter-spacing:0.198px;">Move</span>
<div class="dot" style="left:6.500px;background:#ee5e58"></div>
<div class="dot" style="left:38.800px;background:#43cc52"></div>
<span class="tx" style="left:9.75px;top:25.20px;font-size:10.9px;line-height:14px;color:#f6f6f6;letter-spacing:0.185px;font-weight:bold;-webkit-text-stroke:.12px currentColor;">Move specified directories</span>
<span class="tx" style="left:9.95px;top:51.20px;font-size:10.9px;line-height:14px;color:#f0f0f0;letter-spacing:0.318px;">To directory:</span>
<div class="abs" style="left:82px;top:46.700px;width:392px;height:19.500px;background:#2a478a;border:1.200px solid #8db6f0;border-radius:2.500px;box-shadow:0 0 0 .8px rgba(70,120,210,.55)"></div>
<div class="abs" style="left:84px;top:48.400px;width:373px;height:16.100px;background:#3467cd"></div>
<span class="tx" style="left:84.55px;top:51.20px;font-size:10.9px;line-height:14px;color:#ffffff;letter-spacing:0.524px;">'www/mpwar/2015-2/de-04_Refactoring/refactoring-eloi_rocamora/src</span>
<div class="abs" style="left:456.800px;top:48.2px;width:16.200px;height:16.500px;background:#2a3346;border-radius:0 1.500px 1.500px 0"></div>
<div class="abs" style="left:461px;top:54.2px;width:0;height:0;border-top:5.500px solid #fff;border-left:3.800px solid transparent;border-right:3.800px solid transparent"></div>
<div class="abs" style="left:478px;top:47.7px;width:16px;height:17.500px;background:#414446;border:1px solid #4a4d4f;border-radius:2px"></div>
<div class="abs" style="left:482.300px;top:56.600px;width:1.400px;height:1.400px;background:#b9b9b9;box-shadow:3px 0 0 #b9b9b9,6px 0 0 #b9b9b9"></div>
<span class="tx" style="left:88.55px;top:67.20px;font-size:8.9px;line-height:14px;color:#b8b8b8;letter-spacing:0.434px;">Use ^Space for path completion</span>
<div class="abs" style="left:85px;top:92.3px;width:10.400px;height:10.400px;background:linear-gradient(180deg,#7c7c7c,#686868);border-radius:1px;box-shadow:0 1px 0 rgba(0,0,0,.35)"></div>
<div class="abs" style="left:85px;top:117.8px;width:10.400px;height:10.400px;background:linear-gradient(180deg,#7c7c7c,#686868);border-radius:1px;box-shadow:0 1px 0 rgba(0,0,0,.35)"></div>
<span class="tx" style="left:100.35px;top:91.20px;font-size:10.9px;line-height:14px;color:#f2f2f2;letter-spacing:0.062px;">Search for references</span>
<div class="abs" style="left:165.300px;top:102.6px;width:3.800px;height:1px;background:#e8e8e8"></div>
<span class="tx" style="left:100.35px;top:116.20px;font-size:10.9px;line-height:14px;color:#f2f2f2;letter-spacing:0.326px;">Open moved files in editor</span>
<div class="abs" style="left:13px;top:141.7px;width:18px;height:18px;border-radius:50%;background:radial-gradient(circle at 50% 45%,#4a84b8,#35638f);border:1.500px solid #7a8288"></div>
<span class="tx" style="left:18.15px;top:144.20px;font-size:12.5px;line-height:14px;color:#a9dffc;letter-spacing:0.000px;font-weight:bold;">?</span>
<div class="btn" style="left:382.500px;width:51.800px;background:linear-gradient(180deg,#5b6164,#4d5254)"></div>
<div class="btn" style="left:439.800px;width:52.200px;background:linear-gradient(180deg,#37588b,#2a4873);border-color:#3d5c8e"></div>
<span class="tx" style="left:391.85px;top:144.20px;font-size:10.9px;line-height:14px;color:#f4f4f4;letter-spacing:-0.038px;">Cancel</span>
<span class="tx" style="left:459.25px;top:144.20px;font-size:10.9px;line-height:14px;color:#f8f8f8;letter-spacing:-0.374px;">OK</span>
</div>

<svg class="abs" style="left:575px;top:398.500px" width="12" height="17" viewBox="0 0 12 17"><path d="M1 1v12l2.900-2.500 2 4.600 2-.9-2-4.500h4z" fill="#111" stroke="#fff" stroke-width="1.100" stroke-linejoin="round"/></svg>

</div>
</body></html>
